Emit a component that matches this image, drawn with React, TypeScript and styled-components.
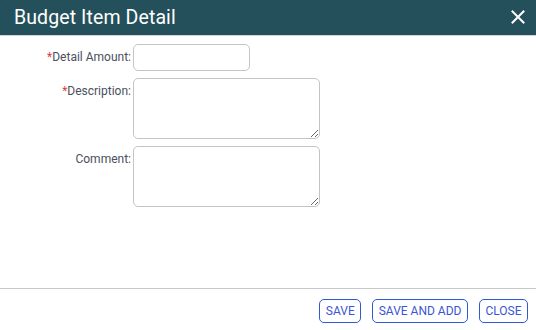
import React from "react";
import styled, { createGlobalStyle } from "styled-components";

const Global = createGlobalStyle`
  html, body { margin: 0; padding: 0; background: #fff; }
  body { font-family: Roboto, "Liberation Sans", Arial, sans-serif; }
  * { box-sizing: border-box; }
`;

const Dialog = styled.div`
  width: 536px;
  height: 330px;
  display: flex;
  flex-direction: column;
  background: #fff;
`;

const Header = styled.div`
  height: 36px;
  background: #24505c;
  border-bottom: 1px solid #d4d4d4;
  display: flex;
  align-items: center;
  justify-content: space-between;
  padding: 0 10px 1px 14px;
`;

const Title = styled.h1`
  margin: 0;
  color: #fff;
  font-size: 19.5px;
  font-weight: 400;
  letter-spacing: 0.1px;
`;

const CloseX = styled.button`
  border: none;
  background: transparent;
  padding: 0;
  width: 16px;
  height: 16px;
  display: flex;
  align-items: center;
  justify-content: center;
  cursor: pointer;
`;

const Body = styled.div`
  flex: 1;
  padding-top: 8px;
  display: flex;
  flex-direction: column;
  gap: 7px;
`;

const Row = styled.div`
  display: grid;
  grid-template-columns: 131px auto;
  column-gap: 2px;
  align-items: start;
`;

const Label = styled.label`
  text-align: right;
  font-size: 12px;
  line-height: 18px;
  padding-top: 4px;
  color: #4b5060;
`;

const Req = styled.span`
  color: #e0393e;
`;

const TextInput = styled.input`
  width: 117px;
  height: 27px;
  border: 1px solid #c4c4c4;
  border-radius: 5px;
  font-family: inherit;
  font-size: 12px;
  padding: 0 6px;
  outline: none;
`;

const Area = styled.textarea`
  width: 187px;
  height: 61px;
  border: 1px solid #c4c4c4;
  border-radius: 5px;
  font-family: inherit;
  font-size: 12px;
  padding: 4px 6px;
  outline: none;
  display: block;
  margin: 0;
`;

const Footer = styled.div`
  border-top: 1px solid #c8c8c8;
  height: 42px;
  display: flex;
  justify-content: flex-end;
  align-items: flex-start;
  gap: 11px;
  padding: 10px 8px 0 0;
`;

const Button = styled.button`
  height: 24px;
  padding: 0 5.5px;
  border: 1px solid #2f5ad4;
  border-radius: 5px;
  background: #fff;
  color: #3a56d4;
  font-family: inherit;
  font-size: 12px;
  text-transform: uppercase;
  cursor: pointer;
`;

export default function App() {
  return (
    <>
      <Global />
      <Dialog>
        <Header>
          <Title>Budget Item Detail</Title>
          <CloseX aria-label="Close">
            <svg width="14" height="14" viewBox="0 0 14 14">
              <path d="M1.5 1.5 L12.5 12.5 M12.5 1.5 L1.5 12.5" stroke="#fff" strokeWidth="2" strokeLinecap="square" />
            </svg>
          </CloseX>
        </Header>
        <Body>
          <Row>
            <Label><Req>*</Req>Detail Amount:</Label>
            <TextInput />
          </Row>
          <Row>
            <Label><Req>*</Req>Description:</Label>
            <Area />
          </Row>
          <Row>
            <Label>Comment:</Label>
            <Area />
          </Row>
        </Body>
        <Footer>
          <Button>Save</Button>
          <Button>Save and Add</Button>
          <Button>Close</Button>
        </Footer>
      </Dialog>
    </>
  );
}
